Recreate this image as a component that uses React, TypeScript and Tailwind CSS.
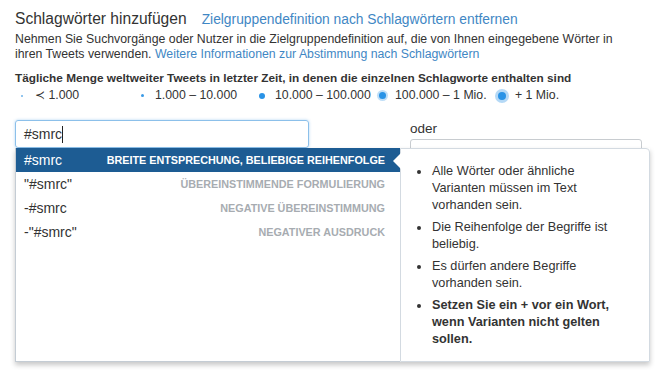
const legend = [
  { label: '≺ 1.000', dot: 'w-[2px] h-[2px] bg-[#6fb3ea]' },
  { label: '1.000 – 10.000', dot: 'w-[3px] h-[3px] bg-[#3a9ae6]' },
  { label: '10.000 – 100.000', dot: 'w-[6px] h-[6px] bg-[#2a93e6]' },
  { label: '100.000 – 1 Mio.', dot: 'w-[7px] h-[7px] bg-[#2a93e6] shadow-[0_0_0_2px_rgba(42,147,230,0.3)]' },
  { label: '+ 1 Mio.', dot: 'w-[8px] h-[8px] bg-[#2a93e6] shadow-[0_0_0_3px_rgba(42,147,230,0.35)]' },
]

const options = [
  { text: '#smrc', hint: 'Breite Entsprechung, beliebige Reihenfolge' },
  { text: '"#smrc"', hint: 'Übereinstimmende Formulierung' },
  { text: '-#smrc', hint: 'Negative Übereinstimmung' },
  { text: '-"#smrc"', hint: 'Negativer Ausdruck' },
]

const tips = [
  'Alle Wörter oder ähnliche Varianten müssen im Text vorhanden sein.',
  'Die Reihenfolge der Begriffe ist beliebig.',
  'Es dürfen andere Begriffe vorhanden sein.',
]

const App = () => {
  return (
    <div className="w-[660px] h-[372px] bg-white overflow-hidden px-[15px] pt-[9px] font-['Liberation_Sans',Arial,sans-serif] text-[#333]">
      {/* Header */}
      <div className="flex items-baseline h-[20px] leading-[20px] whitespace-nowrap">
        <h2 className="text-[15.6px]">Schlagwörter hinzufügen</h2>
        <a href="#" className="ml-[15px] text-[13.8px] text-[#3f87c4]">
          Zielgruppendefinition nach Schlagwörtern entfernen
        </a>
      </div>

      <p className="mt-[3px] text-[12.3px] leading-[15px] whitespace-nowrap">
        Nehmen Sie Suchvorgänge oder Nutzer in die Zielgruppendefinition auf, die von Ihnen eingegebene Wörter in
        <br />
        ihren Tweets verwenden.{' '}
        <a href="#" className="text-[#3f87c4]">Weitere Informationen zur Abstimmung nach Schlagwörtern</a>
      </p>

      <div className="mt-[9px] text-[11.8px] leading-[15px] font-bold whitespace-nowrap">
        Tägliche Menge weltweiter Tweets in letzter Zeit, in denen die einzelnen Schlagworte enthalten sind
      </div>

      {/* Legend */}
      <div className="mt-[1px] flex text-[12.3px] leading-[17px] whitespace-nowrap">
        {legend.map((item) => (
          <div key={item.label} className="w-[120px] flex items-center">
            <div className="w-[14px] flex justify-center">
              <span className={`rounded-full ${item.dot}`} />
            </div>
            <span className="ml-[6px]">{item.label}</span>
          </div>
        ))}
      </div>

      {/* Inputs */}
      <div className="relative mt-[16px] flex">
        <div className="w-[294px] h-[28px] border border-[#8cc0ea] rounded-[3px] shadow-[0_0_3px_rgba(80,160,230,0.45)] pl-[8px] flex items-center text-[14px]">
          #smrc<span className="inline-block w-px h-[17px] bg-[#222]" />
        </div>
        <div className="ml-[101px] w-[232px]">
          <div className="text-[13.5px] leading-[18px]">oder</div>
          <div className="mt-[1px] h-[28px] border border-[#c8ccd0] rounded-[3px] pl-[8px] pt-[6px] text-[14px] text-[#b5b9bd] whitespace-nowrap">
            Weitere Schlagwörter eingeben
          </div>
        </div>

        {/* Dropdown with hint */}
        <div className="absolute left-0 top-[28px] w-[635px] h-[214px] flex shadow-[0_3px_5px_rgba(0,0,0,0.22)]">
          <ul className="w-[385px] bg-white border-l border-b border-[#c4ccd4]">
            {options.map((o, i) => (
              <li
                key={o.text}
                className={`h-[24px] flex items-center justify-between pl-[8px] pr-[15px] ${
                  i === 0 ? 'bg-[#1d5c93] text-white' : 'text-[#333]'
                }`}
              >
                <span className="text-[14px]">{o.text}</span>
                <span className={`text-[10.8px] font-bold uppercase ${i === 0 ? 'text-white' : 'text-[#a7acb1]'}`}>
                  {o.hint}
                </span>
              </li>
            ))}
          </ul>
          <div className="relative w-[250px] bg-white border border-[#d3dae1] rounded-tr-[4px] pl-[31px] pr-[24px] pt-[14px] text-[12.7px] leading-[17px]">
            <svg className="absolute left-[-8px] top-[4px]" width="8" height="16" viewBox="0 0 8 16">
              <path d="M8 0 L0 8 L8 16 Z" fill="#fff" />
            </svg>
            <ul>
              {tips.map((t) => (
                <li key={t} className="relative mb-[5px]">
                  <span className="absolute left-[-15px] top-[7px] w-[4px] h-[4px] rounded-full bg-[#333]" />
                  {t}
                </li>
              ))}
              <li className="relative font-bold">
                <span className="absolute left-[-15px] top-[7px] w-[4px] h-[4px] rounded-full bg-[#333]" />
                Setzen Sie ein + vor ein Wort, wenn Varianten nicht gelten sollen.
              </li>
            </ul>
          </div>
        </div>
      </div>
    </div>
  )
}

export default App
